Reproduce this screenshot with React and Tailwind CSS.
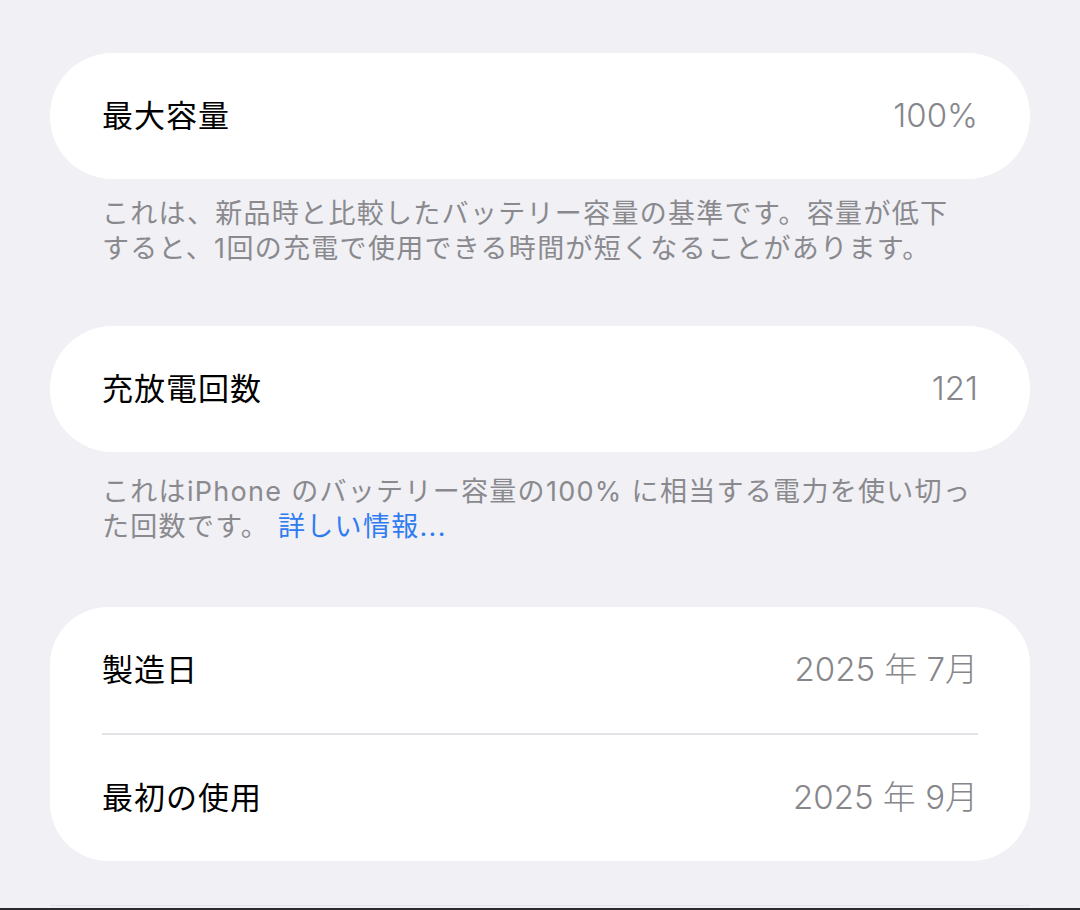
import React from "react";

const latin = { fontFamily: 'Inter, "Noto Sans CJK JP", sans-serif' };

function Row({ label, value }) {
  return (
    <div className="flex h-[126px] items-center justify-between px-[52px]">
      <span className="text-[31px] font-normal tracking-[1px] text-black">{label}</span>
      <span className="text-[33px] font-light text-[#86868b]" style={latin}>{value}</span>
    </div>
  );
}

function Footer({ lines, className }) {
  return (
    <div className={`px-[52px] text-[27px] leading-[35px] tracking-[1.3px] text-[#8a8a8e] ${className}`}>
      {lines.map((l, i) => (
        <div key={i} className="whitespace-nowrap">{l}</div>
      ))}
    </div>
  );
}

export default function App() {
  return (
    <div
      className="flex h-[910px] w-[1080px] flex-col bg-[#f0f0f5] px-[50px] pt-[53px]"
      style={{ fontFamily: 'Inter, "Noto Sans CJK JP", sans-serif' }}
    >
      <div className="rounded-[62px] bg-white">
        <Row label="最大容量" value="100%" />
      </div>
      <Footer
        className="mt-[17px]"
        lines={[
          "これは、新品時と比較したバッテリー容量の基準です。容量が低下",
          "すると、1回の充電で使用できる時間が短くなることがあります。",
        ]}
      />

      <div className="mt-[60px] rounded-[62px] bg-white">
        <Row label="充放電回数" value="121" />
      </div>
      <Footer
        className="mt-[22px]"
        lines={[
          "これはiPhone のバッテリー容量の100% に相当する電力を使い切っ",
          <>
            た回数です。 <span className="text-[#2f7cf0]">詳しい情報...</span>
          </>,
        ]}
      />

      <div className="mt-[63px] rounded-[58px] bg-white">
        <Row label="製造日" value="2025 年 7月" />
        <div className="mx-[52px] h-[2px] bg-[#e4e4e8]" />
        <Row label="最初の使用" value="2025 年 9月" />
      </div>

      <div className="mt-auto">
        <div className="h-px bg-[#e4e4ea]" />
        <div className="h-[2px]" />
        <div className="-mx-[50px] h-[2px] bg-[#2b2b2e]" />
      </div>
    </div>
  );
}
